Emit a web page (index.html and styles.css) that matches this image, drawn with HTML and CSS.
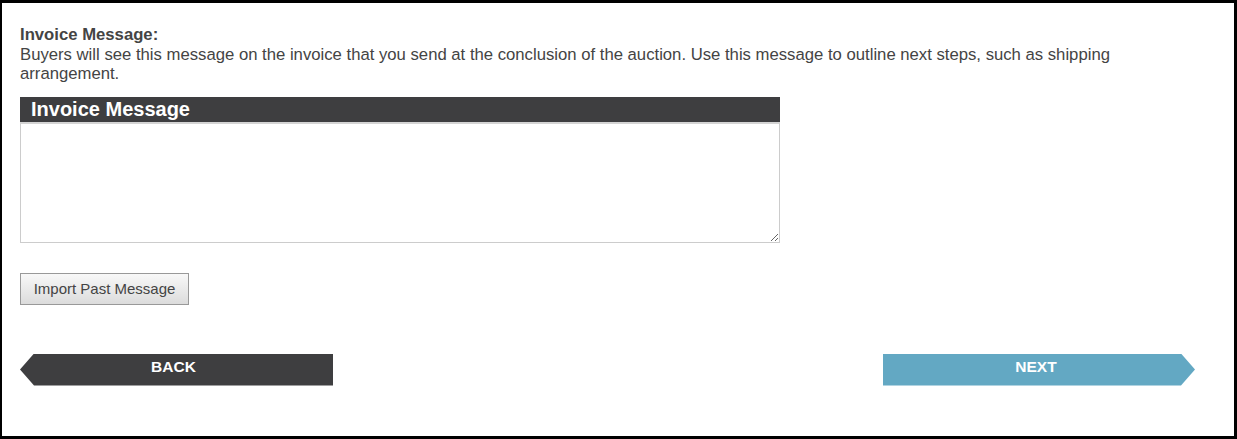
FILE: index.html
```html
<!DOCTYPE html>
<html>
<head>
<meta charset="utf-8">
<link rel="stylesheet" href="styles.css">
</head>
<body>
<div class="frame">
  <div class="content">
    <div class="intro">
      <div class="intro-title">Invoice Message:</div>
      <p class="intro-text">Buyers will see this message on the invoice that you send at the conclusion of the auction. Use this message to outline next steps, such as shipping arrangement.</p>
    </div>
    <div class="panel">
      <div class="panel-head">Invoice Message</div>
      <textarea class="panel-text"></textarea>
    </div>
    <button class="import-btn">Import Past Message</button>
    <div class="nav">
      <button class="nav-btn nav-back">BACK</button>
      <button class="nav-btn nav-next">NEXT</button>
    </div>
  </div>
</div>
</body>
</html>
```
FILE: styles.css
```css
* { box-sizing: border-box; }
html, body { margin: 0; padding: 0; }
body {
  font-family: "Liberation Sans", Arial, sans-serif;
  color: #444;
  background: #fff;
}
.frame {
  width: 1237px;
  height: 439px;
  border-style: solid;
  border-color: #000;
  border-width: 3px 3px 3px 2px;
}
.content {
  padding: 22px 40px 0 18px;
  display: flex;
  flex-direction: column;
}
.intro { font-size: 16.7px; line-height: 19.5px; }
.intro-title { font-weight: bold; }
.intro-text { margin: 0; width: 1125px; }
.panel {
  margin-top: 13px;
  width: 760px;
  display: flex;
  flex-direction: column;
}
.panel-head {
  height: 25px;
  background: #3e3e40;
  color: #fff;
  font-weight: bold;
  font-size: 20px;
  line-height: 24px;
  padding-left: 11px;
}
.panel-text {
  display: block;
  width: 760px;
  height: 121px;
  margin: 0;
  border: 1px solid #ccc;
  border-top: 2px solid #d4d4d4;
  font-family: "Liberation Sans", Arial, sans-serif;
  font-size: 14px;
  outline: none;
}
.import-btn {
  align-self: flex-start;
  margin-top: 30px;
  width: 169px;
  height: 32px;
  border: 1px solid #999;
  background: linear-gradient(#f8f8f8, #dcdcdc);
  color: #444;
  font-family: "Liberation Sans", Arial, sans-serif;
  font-size: 15px;
  padding: 0;
}
.nav {
  margin-top: 49px;
  display: flex;
  justify-content: space-between;
  width: 1175px;
}
.nav-btn {
  width: 313px;
  height: 32px;
  border: none;
  color: #fff;
  font-family: "Liberation Sans", Arial, sans-serif;
  font-weight: bold;
  font-size: 15.5px;
  padding: 0 6px 6px 0;
}
.nav-back {
  background: #3e3e40;
  clip-path: polygon(14px 0, 100% 0, 100% 100%, 14px 100%, 0 50%);
}
.nav-next {
  width: 312px;
  background: #63a8c3;
  clip-path: polygon(0 0, calc(100% - 14px) 0, 100% 50%, calc(100% - 14px) 100%, 0 100%);
}
```
